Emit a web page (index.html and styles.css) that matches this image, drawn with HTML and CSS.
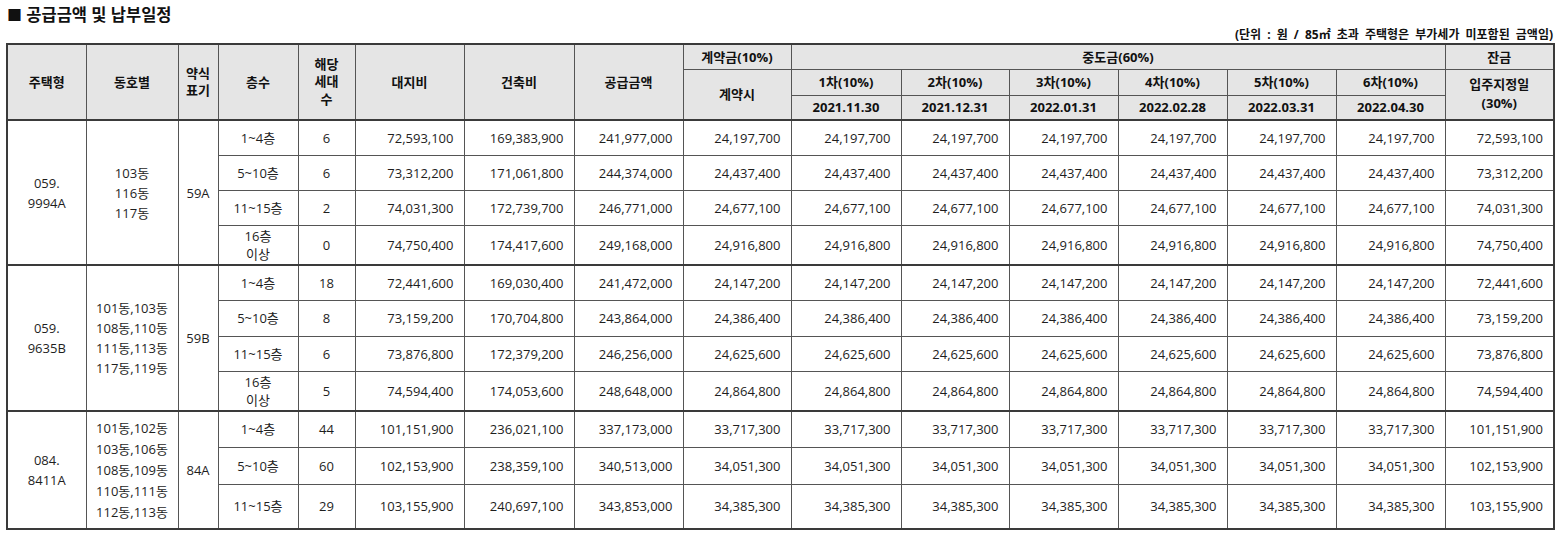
FILE: index.html
```html
<!DOCTYPE html>
<html lang="ko">
<head>
<meta charset="utf-8">
<title>공급금액 및 납부일정</title>
<link rel="stylesheet" href="styles.css">
</head>
<body>
<div class="page">
  <h1 class="title"><span class="sq">■</span> 공급금액 및 납부일정</h1>
  <p class="note">(단위 : 원 / 85㎡ 초과 주택형은 부가세가 미포함된 금액임)</p>
  <table class="price">
    <colgroup>
      <col class="c79"><col class="c92"><col class="c40"><col class="c80"><col class="c57">
      <col class="c109"><col class="c110"><col class="c109"><col class="c108"><col class="c110">
      <col class="c108"><col class="c109"><col class="c109"><col class="c109"><col class="c109"><col class="c109">
    </colgroup>
    <thead>
      <tr class="h25">
        <th rowspan="3">주택형</th>
        <th rowspan="3">동호별</th>
        <th rowspan="3" class="tight">약식<br>표기</th>
        <th rowspan="3">층수</th>
        <th rowspan="3" class="tight">해당<br>세대<br>수</th>
        <th rowspan="3">대지비</th>
        <th rowspan="3">건축비</th>
        <th rowspan="3">공급금액</th>
        <th>계약금(10%)</th>
        <th colspan="6">중도금(60%)</th>
        <th>잔금</th>
      </tr>
      <tr class="h26">
        <th rowspan="2">계약시</th>
        <th>1차(10%)</th><th>2차(10%)</th><th>3차(10%)</th><th>4차(10%)</th><th>5차(10%)</th><th>6차(10%)</th>
        <th rowspan="2" class="tight2">입주지정일<br>(30%)</th>
      </tr>
      <tr class="h25">
        <th>2021.11.30</th><th>2021.12.31</th><th>2022.01.31</th><th>2022.02.28</th><th>2022.03.31</th><th>2022.04.30</th>
      </tr>
    </thead>
    <tbody class="grp">
      <tr class="h35">
        <td rowspan="4" class="ctr">059.<br>9994A</td>
        <td rowspan="4" class="ctr dong">103동<br>116동<br>117동</td>
        <td rowspan="4" class="ctr">59A</td>
        <td class="ctr">1~4층</td><td class="ctr">6</td>
        <td class="num">72,593,100</td><td class="num">169,383,900</td><td class="num">241,977,000</td>
        <td class="num">24,197,700</td><td class="num">24,197,700</td><td class="num">24,197,700</td><td class="num">24,197,700</td><td class="num">24,197,700</td><td class="num">24,197,700</td><td class="num">24,197,700</td>
        <td class="num">72,593,100</td>
      </tr>
      <tr class="h35">
        <td class="ctr">5~10층</td><td class="ctr">6</td>
        <td class="num">73,312,200</td><td class="num">171,061,800</td><td class="num">244,374,000</td>
        <td class="num">24,437,400</td><td class="num">24,437,400</td><td class="num">24,437,400</td><td class="num">24,437,400</td><td class="num">24,437,400</td><td class="num">24,437,400</td><td class="num">24,437,400</td>
        <td class="num">73,312,200</td>
      </tr>
      <tr class="h35">
        <td class="ctr">11~15층</td><td class="ctr">2</td>
        <td class="num">74,031,300</td><td class="num">172,739,700</td><td class="num">246,771,000</td>
        <td class="num">24,677,100</td><td class="num">24,677,100</td><td class="num">24,677,100</td><td class="num">24,677,100</td><td class="num">24,677,100</td><td class="num">24,677,100</td><td class="num">24,677,100</td>
        <td class="num">74,031,300</td>
      </tr>
      <tr class="h40">
        <td class="ctr two">16층<br>이상</td><td class="ctr">0</td>
        <td class="num">74,750,400</td><td class="num">174,417,600</td><td class="num">249,168,000</td>
        <td class="num">24,916,800</td><td class="num">24,916,800</td><td class="num">24,916,800</td><td class="num">24,916,800</td><td class="num">24,916,800</td><td class="num">24,916,800</td><td class="num">24,916,800</td>
        <td class="num">74,750,400</td>
      </tr>
    </tbody>
    <tbody class="grp">
      <tr class="h35">
        <td rowspan="4" class="ctr">059.<br>9635B</td>
        <td rowspan="4" class="ctr dong">101동,103동<br>108동,110동<br>111동,113동<br>117동,119동</td>
        <td rowspan="4" class="ctr">59B</td>
        <td class="ctr">1~4층</td><td class="ctr">18</td>
        <td class="num">72,441,600</td><td class="num">169,030,400</td><td class="num">241,472,000</td>
        <td class="num">24,147,200</td><td class="num">24,147,200</td><td class="num">24,147,200</td><td class="num">24,147,200</td><td class="num">24,147,200</td><td class="num">24,147,200</td><td class="num">24,147,200</td>
        <td class="num">72,441,600</td>
      </tr>
      <tr class="h36">
        <td class="ctr">5~10층</td><td class="ctr">8</td>
        <td class="num">73,159,200</td><td class="num">170,704,800</td><td class="num">243,864,000</td>
        <td class="num">24,386,400</td><td class="num">24,386,400</td><td class="num">24,386,400</td><td class="num">24,386,400</td><td class="num">24,386,400</td><td class="num">24,386,400</td><td class="num">24,386,400</td>
        <td class="num">73,159,200</td>
      </tr>
      <tr class="h35">
        <td class="ctr">11~15층</td><td class="ctr">6</td>
        <td class="num">73,876,800</td><td class="num">172,379,200</td><td class="num">246,256,000</td>
        <td class="num">24,625,600</td><td class="num">24,625,600</td><td class="num">24,625,600</td><td class="num">24,625,600</td><td class="num">24,625,600</td><td class="num">24,625,600</td><td class="num">24,625,600</td>
        <td class="num">73,876,800</td>
      </tr>
      <tr class="h40">
        <td class="ctr two">16층<br>이상</td><td class="ctr">5</td>
        <td class="num">74,594,400</td><td class="num">174,053,600</td><td class="num">248,648,000</td>
        <td class="num">24,864,800</td><td class="num">24,864,800</td><td class="num">24,864,800</td><td class="num">24,864,800</td><td class="num">24,864,800</td><td class="num">24,864,800</td><td class="num">24,864,800</td>
        <td class="num">74,594,400</td>
      </tr>
    </tbody>
    <tbody class="grp">
      <tr class="h36">
        <td rowspan="3" class="ctr">084.<br>8411A</td>
        <td rowspan="3" class="ctr dong5">101동,102동<br>103동,106동<br>108동,109동<br>110동,111동<br>112동,113동</td>
        <td rowspan="3" class="ctr">84A</td>
        <td class="ctr">1~4층</td><td class="ctr">44</td>
        <td class="num">101,151,900</td><td class="num">236,021,100</td><td class="num">337,173,000</td>
        <td class="num">33,717,300</td><td class="num">33,717,300</td><td class="num">33,717,300</td><td class="num">33,717,300</td><td class="num">33,717,300</td><td class="num">33,717,300</td><td class="num">33,717,300</td>
        <td class="num">101,151,900</td>
      </tr>
      <tr class="h37">
        <td class="ctr">5~10층</td><td class="ctr">60</td>
        <td class="num">102,153,900</td><td class="num">238,359,100</td><td class="num">340,513,000</td>
        <td class="num">34,051,300</td><td class="num">34,051,300</td><td class="num">34,051,300</td><td class="num">34,051,300</td><td class="num">34,051,300</td><td class="num">34,051,300</td><td class="num">34,051,300</td>
        <td class="num">102,153,900</td>
      </tr>
      <tr class="h45">
        <td class="ctr">11~15층</td><td class="ctr">29</td>
        <td class="num">103,155,900</td><td class="num">240,697,100</td><td class="num">343,853,000</td>
        <td class="num">34,385,300</td><td class="num">34,385,300</td><td class="num">34,385,300</td><td class="num">34,385,300</td><td class="num">34,385,300</td><td class="num">34,385,300</td><td class="num">34,385,300</td>
        <td class="num">103,155,900</td>
      </tr>
    </tbody>
  </table>
</div>
</body>
</html>
```
FILE: styles.css
```css
html, body {
  margin: 0;
  padding: 0;
  background: #ffffff;
}

body {
  font-family: "Open Sans", "Noto Sans CJK KR", sans-serif;
  color: #1e1e1e;
}

.page {
  padding: 0 12px 0 6px;
  width: 1547px;
}

.title {
  margin: 0;
  padding: 4px 0 0 1px;
  height: 22px;
  font-size: 16.5px;
  line-height: 22px;
  font-weight: 700;
  color: #111;
}

.title .sq {
  font-size: 15px;
}

.note {
  margin: 1px 0 0 0;
  height: 16px;
  font-size: 12px;
  line-height: 16px;
  font-weight: 700;
  text-align: right;
  color: #111;
  word-spacing: 3px;
}

.price {
  width: 1547px;
  table-layout: fixed;
  border-collapse: collapse;
  border: 2px solid #3a3a3a;
  font-size: 13px;
}

.c40 { width: 40px; }
.c57 { width: 57px; }
.c79 { width: 79px; }
.c80 { width: 80px; }
.c92 { width: 92px; }
.c108 { width: 108px; }
.c109 { width: 109px; }
.c110 { width: 110px; }

.price th,
.price td {
  border: 1px solid #555;
  padding: 0;
  vertical-align: middle;
  overflow: hidden;
  white-space: nowrap;
}

.price th {
  background: #e5e5e5;
  font-weight: 700;
  text-align: center;
  line-height: 18px;
  color: #111;
}

.price th.tight {
  line-height: 17.5px;
}

.price th.tight2 {
  line-height: 19px;
}

.price thead tr:last-child th {
  border-bottom: 2px solid #3a3a3a;
}

.price thead th[rowspan="3"] {
  border-bottom: 2px solid #3a3a3a;
}

.price tbody.grp {
  border-top: 2px solid #3a3a3a;
}

.price td {
  line-height: 20px;
}

.price td.ctr {
  text-align: center;
}

.price td.num {
  text-align: right;
  padding-right: 10px;
}

.price td.two {
  line-height: 18px;
}

.price td.dong {
  line-height: 20px;
}

.price td.dong5 {
  line-height: 21px;
}

.h25 { height: 25px; }
.h26 { height: 26px; }
.h35 { height: 35px; }
.h36 { height: 36px; }
.h37 { height: 37px; }
.h40 { height: 40px; }
.h45 { height: 45px; }
```
